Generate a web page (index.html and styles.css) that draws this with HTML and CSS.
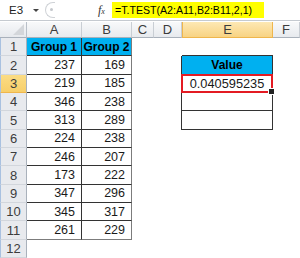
FILE: index.html
```html
<!DOCTYPE html>
<html lang="en">
<head>
  <meta charset="UTF-8">
  <meta name="viewport" content="width=device-width, initial-scale=1.0">
  <title>T.TEST</title>
  <link rel="stylesheet" href="styles.css">
</head>
<body>
  <div class="formula-bar">
    <div class="name-box">E3<span class="arrow"></span></div>
    <div class="splitter"><span class="dot"></span></div>
    <div class="fx"><i>f</i><small>x</small></div>
    <div class="formula">=T.TEST(A2:A11,B2:B11,2,1)</div>
  </div>

  <div class="sheet">
    <div class="corner"></div>
    <div class="col">A</div>
    <div class="col">B</div>
    <div class="col">C</div>
    <div class="col">D</div>
    <div class="col on">E</div>
    <div class="col">F</div>

    <div class="rh">1</div>
    <div class="grp">Group 1</div>
    <div class="grp last">Group 2</div>
    <div class="e top-edge"></div>

    <div class="rh">2</div>
    <div class="num">237</div>
    <div class="num last">169</div>
    <div class="d left-edge"></div>
    <div class="e grp box">Value</div>

    <div class="rh on">3</div>
    <div class="num">219</div>
    <div class="num last">185</div>
    <div class="d left-edge"></div>
    <div class="e box val sel">0.040595235</div>

    <div class="rh">4</div>
    <div class="num">346</div>
    <div class="num last">238</div>
    <div class="d left-edge"></div>
    <div class="e box"></div>

    <div class="rh">5</div>
    <div class="num">313</div>
    <div class="num last">289</div>
    <div class="d left-edge"></div>
    <div class="e box"></div>

    <div class="rh">6</div>
    <div class="num">224</div>
    <div class="num last">238</div>

    <div class="rh">7</div>
    <div class="num">246</div>
    <div class="num last">207</div>

    <div class="rh">8</div>
    <div class="num">173</div>
    <div class="num last">222</div>

    <div class="rh">9</div>
    <div class="num">347</div>
    <div class="num last">296</div>

    <div class="rh">10</div>
    <div class="num">345</div>
    <div class="num last">317</div>

    <div class="rh">11</div>
    <div class="num bottom">261</div>
    <div class="num last bottom">229</div>

    <div class="rh">12</div>
  </div>
</body>
</html>
```

FILE: styles.css
```css
* {
  box-sizing: border-box;
}

body {
  margin: 0;
  width: 300px;
  height: 258px;
  overflow: hidden;
  background: #fff;
  color: #1a1a1a;
  font-family: "Liberation Sans", Arial, sans-serif;
}

/* formula bar */
.formula-bar {
  display: flex;
  align-items: center;
  height: 21px;
  border-bottom: 1px solid #c5cad0;
  margin-bottom: 1px;
}

.name-box {
  position: relative;
  width: 45px;
  height: 100%;
  padding-left: 9px;
  line-height: 20px;
  font-size: 11.5px;
  color: #222;
}

.arrow {
  position: absolute;
  top: 9px;
  right: 6px;
  border-left: 3px solid transparent;
  border-right: 3px solid transparent;
  border-top: 3px solid #444;
}

.splitter {
  position: relative;
  width: 10px;
  height: 16px;
  border: 1px solid #cfd2d6;
  border-right: none;
  border-radius: 8px 0 0 8px;
}

.dot {
  position: absolute;
  top: 5px;
  left: 4px;
  width: 3px;
  height: 3px;
  border-radius: 50%;
  background: #c4c7cc;
}

.fx {
  width: 14px;
  margin-left: 43px;
  font-family: "Liberation Serif", serif;
  font-size: 12px;
  color: #333;
}

.fx small {
  font-size: 8px;
  font-style: italic;
}

.formula {
  width: 152px;
  height: 16px;
  padding-left: 3px;
  background: #ffff00;
  line-height: 16px;
  font-size: 10.6px;
  color: #000;
}

/* sheet grid */
.sheet {
  display: grid;
  grid-template-columns: 27px 55px 50px 22px 28px 91px 1fr;
  grid-template-rows: 16px repeat(11, 18.35px) 1fr;
  height: 236px;
  font-size: 12.5px;
}

.sheet > div {
  display: flex;
  align-items: center;
}

.d {
  grid-column: 5;
}

.e {
  grid-column: 6;
}

.corner {
  position: relative;
  background: linear-gradient(#f7f8fa, #e6e9ed);
  border-right: 1px solid #b8bfc8;
  border-bottom: 1px solid #a9b1bb;
}

.corner::after {
  content: "";
  position: absolute;
  right: 2px;
  bottom: 2px;
  width: 11px;
  height: 11px;
  background: #d3d6da;
  clip-path: polygon(100% 0, 100% 100%, 0 100%);
}

.col {
  justify-content: center;
  background: linear-gradient(#f8f9fa, #e7eaee);
  border-right: 1px solid #c9ced4;
  border-bottom: 1px solid #a9b1bb;
  color: #3c3c3c;
  font-size: 13px;
}

.col.on {
  background: linear-gradient(#fde8b4, #f8d383);
  border-right-color: #efb64c;
  border-bottom-color: #efb64c;
  border-left: 1px solid #efb64c;
}

.rh {
  grid-column: 1;
  justify-content: center;
  background: #e8eaee;
  border-left: 1px solid #a9c1e0;
  border-right: 1px solid #a9b1bb;
  border-bottom: 1px solid #d2d6dc;
  color: #3c3c3c;
  font-size: 13px;
}

.rh.on {
  background: linear-gradient(#fbdc84, #f7cf6a);
  border-bottom-color: #efb64c;
}

/* data tables */
.grp {
  justify-content: center;
  background: #00b0f0;
  color: #000;
  font-weight: bold;
  font-size: 12px;
  border-right: 1px solid #333;
  border-bottom: 1px solid #333;
}

.num {
  justify-content: flex-end;
  padding-right: 6px;
  border-right: 1px solid #333;
  border-bottom: 1px solid #333;
}

.num.last,
.grp.last {
  border-right-color: #7c7c7c;
}

.num.bottom {
  border-bottom-color: #7c7c7c;
}

.top-edge {
  border-bottom: 1px solid #333;
}

.left-edge {
  border-right: 1px solid #333;
}

.box {
  border-right: 1px solid #333;
  border-bottom: 1px solid #333;
}

.val {
  justify-content: center;
  font-size: 12.8px;
}

.sel {
  position: relative;
}

.sel::before {
  content: "";
  position: absolute;
  top: -1px;
  left: -1px;
  right: -1px;
  bottom: -1px;
  border: 2px solid #e31b23;
}

.sel::after {
  content: "";
  position: absolute;
  right: -3px;
  bottom: -3px;
  width: 5px;
  height: 5px;
  background: #222;
  border: 1px solid #fff;
}
```
